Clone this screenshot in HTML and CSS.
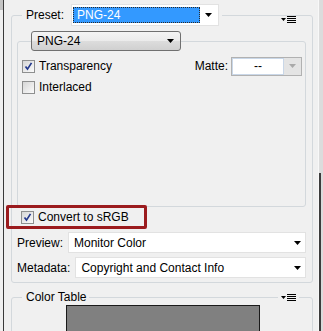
FILE: index.html
```html
<!DOCTYPE html>
<html lang="en">
<head>
    <meta charset="UTF-8">
    <title>Save for Web - PNG-24</title>
    <link rel="stylesheet" href="styles.css">
</head>
<body>
    <div class="window">
        <div class="edge-left"><div class="edge-cap"></div></div>

        <div class="panel">
            <fieldset class="group">
                <legend class="group-title">
                    <span class="label">Preset:</span>
                    <div class="select select-preset">
                        <span class="select-value is-selected">PNG-24</span>
                        <svg class="arrow" width="7" height="4" viewBox="0 0 7 4"><path d="M0 0h7L3.5 4z"/></svg>
                    </div>
                </legend>
                <span class="group-menu">
                    <svg width="15" height="8" viewBox="0 0 15 8"><path d="M0 2h5L2.5 5z"/><path d="M6 0.5h9M6 2.5h9M6 4.5h9M6 6.5h9" stroke="#000" stroke-width="1"/></svg>
                </span>

                <fieldset class="subgroup">
                    <legend class="dropdown">
                        <span>PNG-24</span>
                        <svg class="arrow" width="7" height="4" viewBox="0 0 7 4"><path d="M0 0h7L3.5 4z"/></svg>
                    </legend>
                    <div class="row">
                        <label class="check">
                            <span class="box"><svg width="11" height="11" viewBox="0 0 11 11"><path d="M2.5 5.5l2 2.6 4-6.2" fill="none" stroke="#24398c" stroke-width="1.7"/></svg></span>
                            Transparency
                        </label>
                        <div class="matte">
                            <span>Matte:</span>
                            <div class="combo">
                                <span class="combo-input">--</span>
                                <span class="combo-btn"><svg width="7" height="4" viewBox="0 0 7 4"><path d="M0 0h7L3.5 4z" fill="#a9a9a9"/></svg></span>
                            </div>
                        </div>
                    </div>
                    <div class="row">
                        <label class="check"><span class="box"></span>Interlaced</label>
                    </div>
                </fieldset>

                <div class="row row-convert">
                    <label class="check">
                        <span class="box"><svg width="11" height="11" viewBox="0 0 11 11"><path d="M2.5 5.5l2 2.6 4-6.2" fill="none" stroke="#24398c" stroke-width="1.7"/></svg></span>
                        Convert to sRGB
                    </label>
                </div>

                <div class="field-row first">
                    <span class="label">Preview:</span>
                    <div class="select">
                        <span class="select-value">Monitor Color</span>
                        <svg class="arrow" width="7" height="4" viewBox="0 0 7 4"><path d="M0 0h7L3.5 4z"/></svg>
                    </div>
                </div>
                <div class="field-row">
                    <span class="label">Metadata:</span>
                    <div class="select">
                        <span class="select-value">Copyright and Contact Info</span>
                        <svg class="arrow" width="7" height="4" viewBox="0 0 7 4"><path d="M0 0h7L3.5 4z"/></svg>
                    </div>
                </div>
            </fieldset>

            <!-- red annotation box around the sRGB option -->
            <div class="highlight"></div>

            <fieldset class="group group-table">
                <legend class="group-title">Color Table</legend>
                <span class="group-menu">
                    <svg width="15" height="8" viewBox="0 0 15 8"><path d="M0 2h5L2.5 5z"/><path d="M6 0.5h9M6 2.5h9M6 4.5h9M6 6.5h9" stroke="#000" stroke-width="1"/></svg>
                </span>
                <div class="swatch"></div>
            </fieldset>
        </div>

        <div class="edge-right"><div class="edge-thumb"></div></div>
    </div>
</body>
</html>
```

FILE: styles.css
```css
body {
    margin: 0;
    font-family: "Liberation Sans", Arial, sans-serif;
    font-size: 12px;
    color: #000;
    background-color: #f0f0f0;
    overflow: hidden;
}

.window {
    display: flex;
    width: 323px;
    height: 331px;
    overflow: hidden;
}

.edge-left {
    width: 3px;
    border-right: 1px solid #3a3a3a;
}

.edge-cap {
    height: 10px;
    background-color: #c4c4c4;
}

.edge-right {
    width: 4px;
    background-color: #dcdcdc;
    border-left: 1px solid #f8f8f8;
}

.edge-thumb {
    margin-top: 173px;
    height: 200px;
    border-left: 2px solid #3c3c3c;
}

.panel {
    position: relative;
    flex: 1;
    padding-top: 4px;
}

/* group boxes */
.group {
    position: relative;
    margin: 0 5px 0 7px;
    padding: 0 0 4px 0;
    border: 1px solid #d3d8dc;
    border-radius: 3px;
    min-width: 0;
}

.group-title {
    display: flex;
    align-items: center;
    gap: 7px;
    margin-left: 10px;
    padding: 0 3px 0 4px;
    line-height: 14px;
}

.group-menu {
    position: absolute;
    top: -10px;
    right: 13px;
    display: flex;
    padding: 0 3px;
    background-color: #f0f0f0;
}

.select {
    display: flex;
    align-items: center;
    flex: 1;
    height: 21px;
    box-sizing: border-box;
    background-color: #fff;
    border: 1px solid #e2e2e2;
    padding: 0 4px 0 5px;
}

.select-value {
    flex: 1;
    white-space: nowrap;
}

.select-preset {
    flex: none;
    width: 148px;
    height: 22px;
    padding: 2px 4px 2px 1px;
}

.select-preset .select-value {
    flex: none;
    width: 127px;
    height: 100%;
    box-sizing: border-box;
    margin-right: 5px;
    padding-left: 3px;
    line-height: 15px;
    color: #fff;
    background-color: #3399ff;
    border: 1px dotted #2b2b2b;
}

.subgroup {
    margin: 5px 6px 0 5px;
    padding: 6px 3px 110px 4px;
    border: 1px solid #d3d8dc;
    border-radius: 3px;
    min-width: 0;
}

.dropdown {
    display: flex;
    align-items: center;
    width: 150px;
    height: 20px;
    box-sizing: border-box;
    margin-left: 9px;
    padding: 0 6px 0 5px;
    border: 1px solid #707070;
    border-radius: 3px;
    background: linear-gradient(#f4f4f4, #ebebeb 50%, #dddddd 50%, #d0d0d0);
}

.dropdown span {
    flex: 1;
}

.row {
    display: flex;
    align-items: center;
    justify-content: space-between;
    height: 18px;
}

.row + .row {
    margin-top: 3px;
}

.check {
    display: flex;
    align-items: center;
    gap: 4px;
}

.box {
    display: flex;
    align-items: center;
    justify-content: center;
    width: 13px;
    height: 13px;
    box-sizing: border-box;
    border: 1px solid #8e8f8f;
    background: linear-gradient(135deg, #d6d6d6, #fbfbfb);
}

.matte {
    display: flex;
    align-items: center;
    gap: 3px;
}

.combo {
    display: flex;
    width: 71px;
    height: 19px;
    box-sizing: border-box;
    border: 1px solid #b1b1b1;
}

.combo-input {
    flex: 1;
    text-align: center;
    line-height: 15px;
    background-color: #fff;
    border: 1px solid #c9d7e8;
}

.combo-btn {
    display: flex;
    align-items: center;
    justify-content: center;
    width: 17px;
    background-color: #e4e4e4;
}

.row-convert {
    margin-top: 1px;
    padding-left: 9px;
}

.field-row {
    display: flex;
    align-items: center;
    gap: 5px;
    margin: 4px 6px 0 5px;
}

.field-row.first {
    margin-top: 6px;
}

.highlight {
    position: absolute;
    left: 2px;
    top: 205px;
    width: 141px;
    height: 24px;
    box-sizing: border-box;
    border: 3px solid #9b1b1e;
    border-radius: 2px;
}

.group-table {
    margin-top: 7px;
    padding-bottom: 0;
}

.swatch {
    margin: 1px 0 0 54px;
    width: 194px;
    height: 60px;
    box-sizing: border-box;
    background-color: #808080;
    border: 1px solid #1a1a1a;
}
```
